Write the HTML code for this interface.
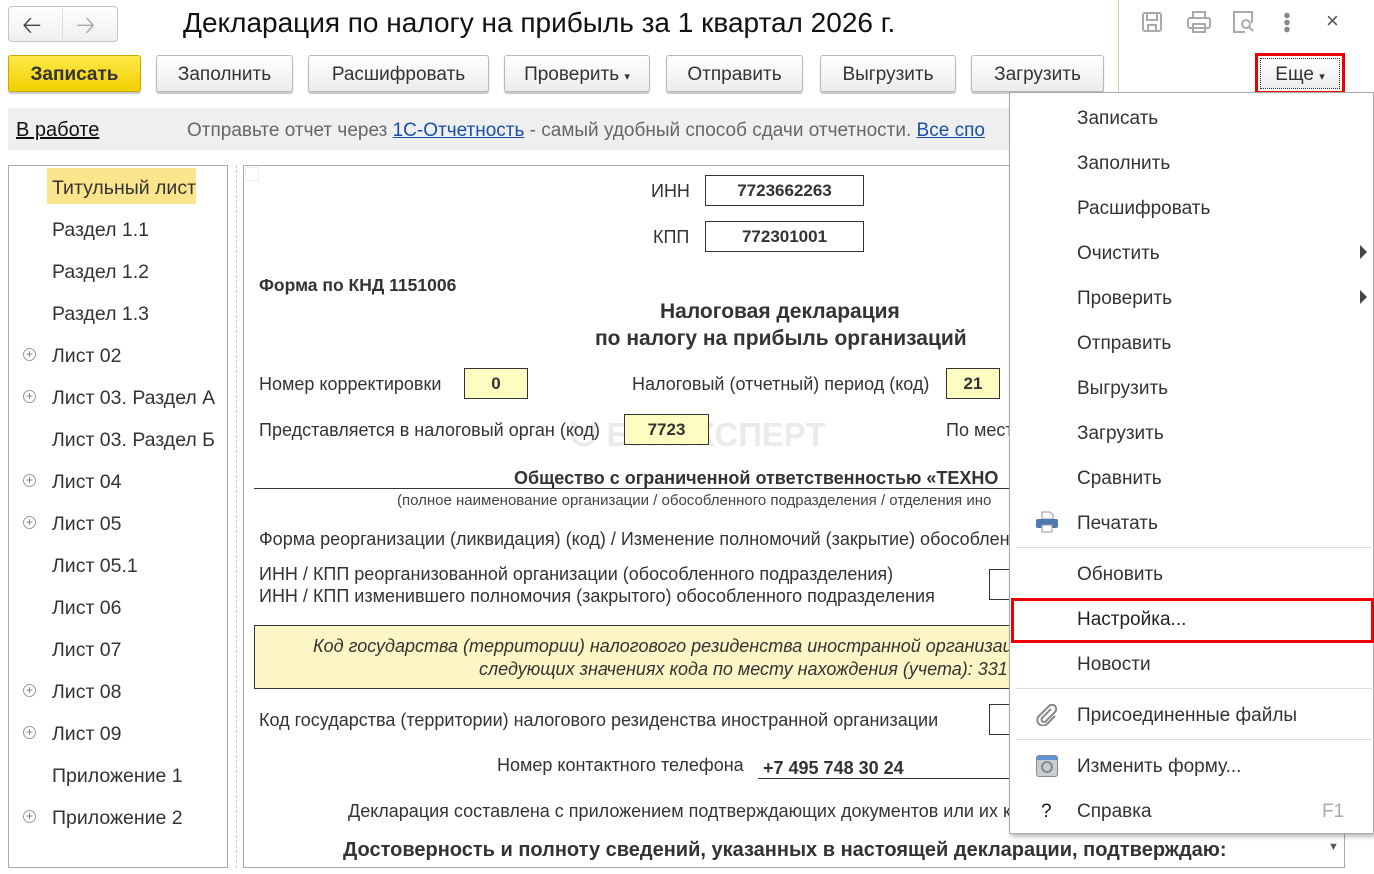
<!DOCTYPE html>
<html><head><meta charset="utf-8"><style>
*{margin:0;padding:0;box-sizing:border-box}
body{width:1374px;height:874px;background:#fff;font-family:"Liberation Sans",Arial,sans-serif;color:#333;position:relative;overflow:hidden}
.a{position:absolute;white-space:nowrap}
.btn{position:absolute;top:55px;height:37px;border:1px solid #b8b8b8;border-radius:3px;background:linear-gradient(#fff,#ececec);box-shadow:0 2px 1px #c8c8c8;font-size:19px;text-align:center;line-height:37px;color:#333}
.tree{font-size:19.5px;color:#333}
.plus{position:absolute;width:13px;height:13px;border:1px solid #999;border-radius:50%;font-size:12px;line-height:10px;text-align:center;color:#777}
.f{font-size:18px;color:#333}
.box{position:absolute;border:1px solid #333;background:#fdfdc2;font-weight:bold;font-size:17px;text-align:center}
.mi{position:absolute;left:1077px;font-size:19px;color:#333}
.sep{position:absolute;left:1016px;right:0;height:1px;background:#ddd}
</style></head><body>
<div class="a" style="left:8px;top:6px;width:110px;height:36px;border:1px solid #c4c4c4;border-radius:4px;background:linear-gradient(#fff,#efefef)"></div>
<div class="a" style="left:62px;top:8px;width:1px;height:32px;background:#ddd"></div>
<div class="a" style="left:22px;top:8px;font-size:24px;color:#444">&#129120;</div>
<div class="a" style="left:76px;top:8px;font-size:24px;color:#aaa">&#129122;</div>
<div class="a" style="left:183px;top:7px;font-size:28px;color:#111">Декларация по налогу на прибыль за 1 квартал 2026 г.</div>
<svg class="a" style="left:1140px;top:10px" width="24" height="24" viewBox="0 0 24 24" fill="none" stroke="#aaa" stroke-width="2"><rect x="3" y="3" width="18" height="18" rx="2"/><rect x="7" y="3" width="10" height="7"/><rect x="8" y="15" width="8" height="6"/></svg>
<svg class="a" style="left:1186px;top:10px" width="26" height="24" viewBox="0 0 26 24" fill="none" stroke="#aaa" stroke-width="2"><rect x="7" y="2" width="12" height="6"/><rect x="2" y="8" width="22" height="10" rx="2"/><rect x="7" y="14" width="12" height="8"/></svg>
<svg class="a" style="left:1231px;top:10px" width="24" height="24" viewBox="0 0 24 24" fill="none" stroke="#aaa" stroke-width="2"><path d="M14 22H3V2h18v11"/><circle cx="15" cy="14" r="4"/><path d="M18 17l4 4"/></svg>
<div class="a" style="left:1284px;top:12px;width:6px;height:22px;background:radial-gradient(circle,#888 2.5px,transparent 3px) 0 0/6px 7px"></div>
<div class="a" style="left:1326px;top:8px;font-size:22px;color:#555">×</div>
<div class="a" style="left:1118px;top:0;width:1px;height:276px;background:#d8d0a0"></div>
<div class="btn" style="left:8px;width:133px;background:linear-gradient(#ffe94a,#f2cf00);border-color:#c9a800;font-weight:bold;color:#333">Записать</div>
<div class="btn" style="left:156px;width:137px">Заполнить</div>
<div class="btn" style="left:308px;width:181px">Расшифровать</div>
<div class="btn" style="left:504px;width:146px">Проверить <span style="font-size:11px">▾</span></div>
<div class="btn" style="left:666px;width:137px">Отправить</div>
<div class="btn" style="left:820px;width:136px">Выгрузить</div>
<div class="btn" style="left:971px;width:133px">Загрузить</div>
<div class="btn" style="left:1260px;width:80px;top:58px;height:31px;line-height:31px;border:1px dotted #333;border-radius:0;box-shadow:none">Еще <span style="font-size:11px">▾</span></div>
<div class="a" style="left:1255px;top:53px;width:90px;height:41px;border:3px solid #e00"></div>
<div class="a" style="left:8px;top:108px;width:1010px;height:42px;background:#efefef"></div>
<div class="a" style="left:16px;top:119px;font-size:20px;color:#111;text-decoration:underline">В работе</div>
<div class="a" style="left:187px;top:120px;font-size:19px;color:#666">Отправьте отчет через <span style="color:#1a4fa8;text-decoration:underline">1С-Отчетность</span> - самый удобный способ сдачи отчетности. <span style="color:#1a4fa8;text-decoration:underline">Все спо</span></div>
<div class="a" style="left:8px;top:165px;width:220px;height:703px;border:1px solid #aaa"></div>
<div class="a" style="left:236px;top:165px;height:703px;border-left:1px dashed #ccc"></div>
<div class="a" style="left:47px;top:168px;width:149px;height:36px;background:#fde58e"></div>
<div class="a tree" style="left:52px;top:177px">Титульный лист</div>
<div class="a tree" style="left:52px;top:219px">Раздел 1.1</div>
<div class="a tree" style="left:52px;top:261px">Раздел 1.2</div>
<div class="a tree" style="left:52px;top:303px">Раздел 1.3</div>
<div class="a tree" style="left:52px;top:345px">Лист 02</div><div class="plus" style="left:23px;top:348px">+</div>
<div class="a tree" style="left:52px;top:387px">Лист 03. Раздел А</div><div class="plus" style="left:23px;top:390px">+</div>
<div class="a tree" style="left:52px;top:429px">Лист 03. Раздел Б</div>
<div class="a tree" style="left:52px;top:471px">Лист 04</div><div class="plus" style="left:23px;top:474px">+</div>
<div class="a tree" style="left:52px;top:513px">Лист 05</div><div class="plus" style="left:23px;top:516px">+</div>
<div class="a tree" style="left:52px;top:555px">Лист 05.1</div>
<div class="a tree" style="left:52px;top:597px">Лист 06</div>
<div class="a tree" style="left:52px;top:639px">Лист 07</div>
<div class="a tree" style="left:52px;top:681px">Лист 08</div><div class="plus" style="left:23px;top:684px">+</div>
<div class="a tree" style="left:52px;top:723px">Лист 09</div><div class="plus" style="left:23px;top:726px">+</div>
<div class="a tree" style="left:52px;top:765px">Приложение 1</div>
<div class="a tree" style="left:52px;top:807px">Приложение 2</div><div class="plus" style="left:23px;top:810px">+</div>
<div class="a" style="left:243px;top:165px;width:1102px;height:703px;border:1px solid #aaa"></div>
<div class="a" style="left:245px;top:167px;width:14px;height:14px;border:1px solid #eee"></div>
<div class="a f" style="left:651px;top:181px">ИНН</div>
<div class="box" style="left:705px;top:175px;width:159px;height:31px;line-height:29px;background:#fff">7723662263</div>
<div class="a f" style="left:653px;top:227px">КПП</div>
<div class="box" style="left:705px;top:221px;width:159px;height:31px;line-height:29px;background:#fff">772301001</div>
<div class="a f" style="left:259px;top:275px;font-weight:bold;font-size:17.5px">Форма по КНД 1151006</div>
<div class="a" style="left:660px;top:300px;font-size:21px;font-weight:bold">Налоговая декларация</div>
<div class="a" style="left:595px;top:327px;font-size:21px;font-weight:bold">по налогу на прибыль организаций</div>
<div class="a" style="left:570px;top:416px;font-size:33px;font-weight:bold;color:#ebebeb">ᗢ БУХЭКСПЕРТ</div>
<div class="a f" style="left:259px;top:374px">Номер корректировки</div>
<div class="box" style="left:464px;top:368px;width:64px;height:31px;line-height:29px">0</div>
<div class="a f" style="left:632px;top:374px">Налоговый (отчетный) период (код)</div>
<div class="box" style="left:946px;top:368px;width:54px;height:31px;line-height:29px">21</div>
<div class="a f" style="left:259px;top:420px">Представляется в налоговый орган (код)</div>
<div class="box" style="left:624px;top:414px;width:85px;height:31px;line-height:29px">7723</div>
<div class="a f" style="left:946px;top:420px">По мест</div>
<div class="a f" style="left:514px;top:468px;font-weight:bold">Общество с ограниченной ответственностью «ТЕХНО</div>
<div class="a" style="left:254px;top:488px;width:760px;height:1px;background:#333"></div>
<div class="a" style="left:397px;top:492px;font-size:15px;color:#444">(полное наименование организации / обособленного подразделения / отделения ино</div>
<div class="a f" style="left:259px;top:529px">Форма реорганизации (ликвидация) (код) / Изменение полномочий (закрытие) обособлен</div>
<div class="a f" style="left:259px;top:564px">ИНН / КПП реорганизованной организации (обособленного подразделения)</div>
<div class="a f" style="left:259px;top:586px">ИНН / КПП изменившего полномочия (закрытого) обособленного подразделения</div>
<div class="a" style="left:989px;top:569px;width:30px;height:31px;border:1px solid #333"></div>
<div class="a" style="left:254px;top:625px;width:770px;height:64px;border:1px solid #333;background:#fcf6c6"></div>
<div class="a f" style="left:313px;top:636px;font-style:italic">Код государства (территории) налогового резиденства иностранной организац</div>
<div class="a f" style="left:479px;top:659px;font-style:italic">следующих значениях кода по месту нахождения (учета): 331</div>
<div class="a f" style="left:259px;top:710px">Код государства (территории) налогового резиденства иностранной организации</div>
<div class="a" style="left:989px;top:704px;width:30px;height:31px;border:1px solid #333"></div>
<div class="a f" style="left:497px;top:755px">Номер контактного телефона</div>
<div class="a f" style="left:763px;top:758px;font-weight:bold">+7 495 748 30 24</div>
<div class="a" style="left:758px;top:778px;width:260px;height:1px;background:#333"></div>
<div class="a f" style="left:348px;top:801px">Декларация составлена с приложением подтверждающих документов или их к</div>
<div class="a" style="left:343px;top:839px;font-size:20px;font-weight:bold">Достоверность и полноту сведений, указанных в настоящей декларации, подтверждаю:</div>
<div class="a" style="left:1328px;top:841px;font-size:11px;color:#555">▼</div>
<div class="a" style="left:1009px;top:92px;width:365px;height:742px;background:#fff;border:1px solid #aaa;box-shadow:2px 3px 4px rgba(0,0,0,.25)"></div>
<div class="mi" style="top:108px">Записать</div>
<div class="mi" style="top:153px">Заполнить</div>
<div class="mi" style="top:198px">Расшифровать</div>
<div class="mi" style="top:243px">Очистить</div><div class="a" style="left:1360px;top:245px;width:0;height:0;border-left:7px solid #444;border-top:7px solid transparent;border-bottom:7px solid transparent"></div>
<div class="mi" style="top:288px">Проверить</div><div class="a" style="left:1360px;top:290px;width:0;height:0;border-left:7px solid #444;border-top:7px solid transparent;border-bottom:7px solid transparent"></div>
<div class="mi" style="top:333px">Отправить</div>
<div class="mi" style="top:378px">Выгрузить</div>
<div class="mi" style="top:423px">Загрузить</div>
<div class="mi" style="top:468px">Сравнить</div>
<svg class="a" style="left:1035px;top:511px" width="24" height="22" viewBox="0 0 24 22"><path d="M7 1h8l3 3v4H7z" fill="#fff" stroke="#999"/><rect x="1" y="8" width="22" height="9" rx="2" fill="#4a7ab0"/><rect x="7" y="14" width="10" height="7" fill="#fff" stroke="#999"/></svg>
<div class="mi" style="top:513px">Печатать</div>
<div class="sep" style="top:547px"></div>
<div class="mi" style="top:564px">Обновить</div>
<div class="a" style="left:1011px;top:598px;width:363px;height:45px;border:3px solid #e00"></div>
<div class="mi" style="top:609px;color:#222">Настройка...</div>
<div class="mi" style="top:654px">Новости</div>
<div class="sep" style="top:688px"></div>
<svg class="a" style="left:1036px;top:704px" width="22" height="22" viewBox="0 0 22 22" fill="none" stroke="#888" stroke-width="2"><path d="M15 5L6 14a2.5 2.5 0 0 0 3.5 3.5L19 8a4 4 0 0 0-6-6L3 12a5.5 5.5 0 0 0 8 8l8-8"/></svg>
<div class="mi" style="top:705px">Присоединенные файлы</div>
<div class="sep" style="top:739px"></div>
<div class="a" style="left:1036px;top:755px;width:22px;height:22px;border-radius:3px;background:linear-gradient(#5b95d6 0 4px,#c9ccd0 4px);border:1px solid #888"></div>
<div class="a" style="left:1041px;top:761px;width:12px;height:12px;border:2px solid #888;border-radius:50%"></div>
<div class="mi" style="top:756px">Изменить форму...</div>
<div class="a" style="left:1041px;top:801px;font-size:19px;color:#111">?</div>
<div class="mi" style="top:801px">Справка</div>
<div class="a" style="left:1322px;top:801px;font-size:19px;color:#aaa">F1</div>
</body></html>
